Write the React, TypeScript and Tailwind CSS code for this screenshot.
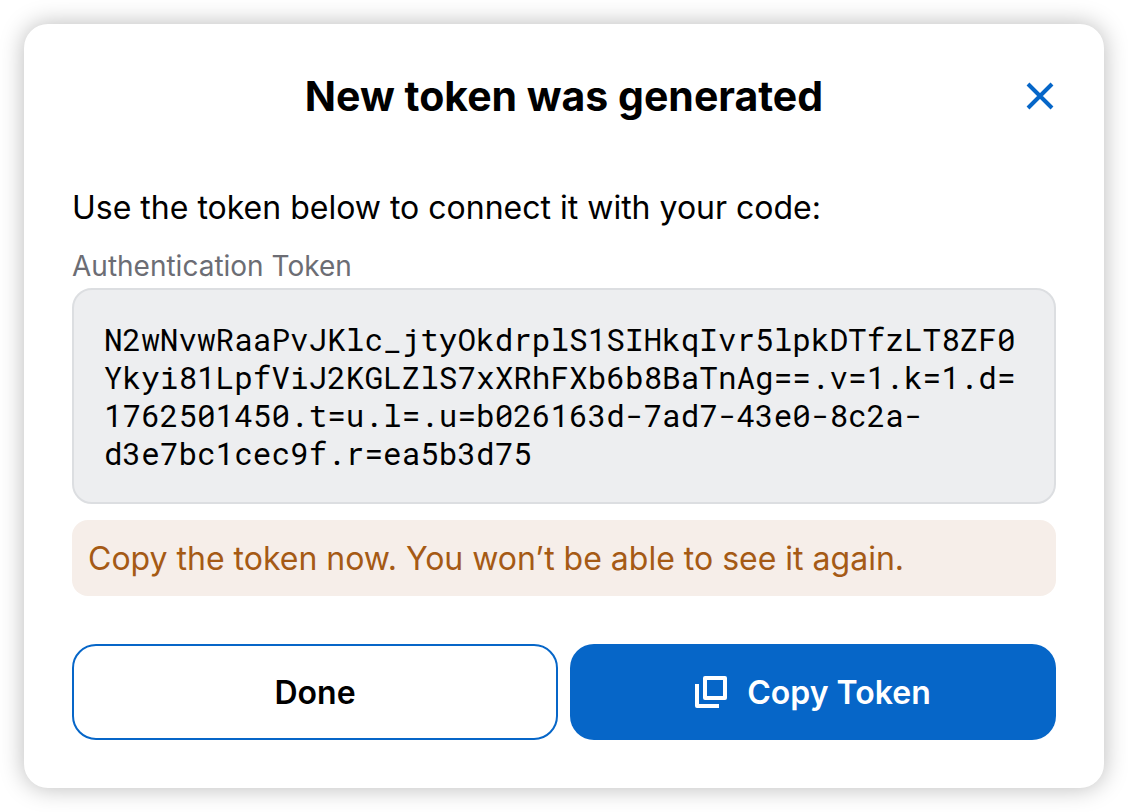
export default function App() {
  return (
    <main className="min-h-screen bg-white p-6 font-['Inter',sans-serif] text-black">
      <section
        role="dialog"
        aria-labelledby="dialog-title"
        className="rounded-3xl bg-white p-12 shadow-[0_0_24px_rgba(0,0,0,0.28)]"
      >
        <header className="grid grid-cols-[32px_1fr_32px] items-center">
          <h1 id="dialog-title" className="col-start-2 text-center text-[41px] leading-12 font-bold">
            New token was generated
          </h1>
          <button type="button" aria-label="Close" className="flex size-8 items-center justify-center text-[#0666c8]">
            <svg viewBox="0 0 32 32" className="size-8" fill="none" stroke="currentColor" strokeWidth="4">
              <path d="M4 4 28 28M28 4 4 28" />
            </svg>
          </button>
        </header>
        <p className="mt-17 text-[32px] leading-10">Use the token below to connect it with your code:</p>
        <label htmlFor="token" className="mt-5 block text-[28px] leading-9 text-[#6c6d74]">
          Authentication Token
        </label>
        <output
          id="token"
          className="mt-1 block rounded-[20px] border-2 border-[#dcdee1] bg-[#edeef0] p-[30px] font-['Roboto_Mono','DejaVu_Sans_Mono',monospace] text-[31px] leading-[38px]"
        >
          N2wNvwRaaPvJKlc_jtyOkdrplS1SIHkqIvr5lpkDTfzLT8ZF0
          <br />
          Ykyi81LpfViJ2KGLZlS7xXRhFXb6b8BaTnAg==.v=1.k=1.d=
          <br />
          1762501450.t=u.l=.u=b026163d-7ad7-43e0-8c2a-
          <br />
          d3e7bc1cec9f.r=ea5b3d75
        </output>
        <p className="mt-4 rounded-2xl bg-[#f6eee9] px-4 pt-[19px] pb-[17px] text-[32px] leading-10 text-[#a55a15]">
          Copy the token now. You won’t be able to see it again.
        </p>
        <footer className="mt-12 grid grid-cols-2 gap-3 text-[32px] leading-10 font-semibold">
          <button type="button" className="h-24 rounded-3xl border-2 border-[#0666c8] pt-0.5">
            Done
          </button>
          <button type="button" className="flex h-24 items-center justify-center gap-5 rounded-3xl bg-[#0666c8] text-white">
            <svg viewBox="0 0 32 32" className="size-8" fill="none" stroke="currentColor" strokeWidth="4" strokeLinejoin="round">
              <path d="M10 2H30V22H10ZM2 8V30H24" />
            </svg>
            <span className="pt-0.5">Copy Token</span>
          </button>
        </footer>
      </section>
    </main>
  );
}
